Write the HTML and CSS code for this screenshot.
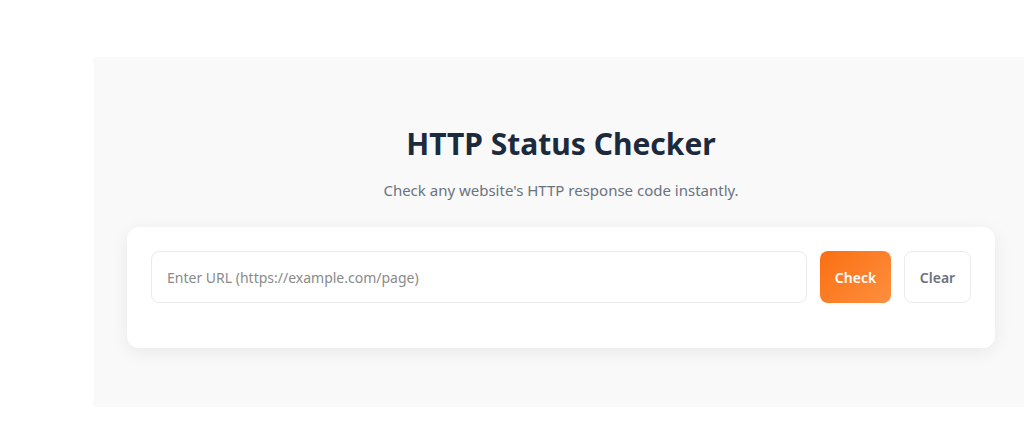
FILE: index.html
```html
<!DOCTYPE html>
<html lang="en">
<head>
  <meta charset="UTF-8">
  <meta name="viewport" content="width=device-width, initial-scale=1.0">
  <title>HTTP Status Checker</title>
  <link rel="stylesheet" href="styles.css">
</head>
<body>
  <main class="panel">
    <h1>HTTP Status Checker</h1>
    <p class="subtitle">Check any website's HTTP response code instantly.</p>

    <!-- Checker card -->
    <div class="card">
      <div class="row">
        <input type="text" class="url-input" placeholder="Enter URL (https://example.com/page)" autocomplete="off">
        <button class="check-btn">Check</button>
        <button class="clear-btn">Clear</button>
      </div>
      <div class="results"></div>
    </div>
  </main>
</body>
</html>
```

FILE: styles.css
```css
body {
  margin: 0;
  background: #ffffff;
  font-family: "Noto Sans", "Open Sans", Arial, sans-serif;
  color: #1e293b;
}

.panel {
  margin: 57px 0 0 94px;
  width: 934px;
  height: 350px;
  box-sizing: border-box;
  padding: 67px 33px 0;
  background: #f9f9f9;
}

h1 {
  margin: 0;
  text-align: center;
  font-size: 30px;
  line-height: 40px;
  font-weight: 700;
  color: #1b2a3d;
}

.subtitle {
  margin: 14px 0 0;
  text-align: center;
  font-size: 15px;
  line-height: 24px;
  color: #6b7280;
}

.card {
  margin-top: 25px;
  background: #ffffff;
  border-radius: 12px;
  padding: 24px 24px 0;
  box-shadow: 0 4px 18px rgba(0, 0, 0, 0.07);
}

.row {
  display: flex;
  gap: 13px;
}

.url-input {
  flex: 1;
  height: 52px;
  box-sizing: border-box;
  padding: 0 15px;
  border: 1px solid #ebebeb;
  border-radius: 8px;
  font-family: inherit;
  font-size: 14px;
  color: #333;
}

.url-input::placeholder {
  color: #8a8a8a;
}

.check-btn, .clear-btn {
  height: 52px;
  border-radius: 8px;
  font-family: inherit;
  font-size: 14px;
  font-weight: 600;
  cursor: pointer;
}

.check-btn {
  width: 71px;
  border: none;
  color: #ffffff;
  background: linear-gradient(135deg, #fb6f12, #fd8f3f);
}

.clear-btn {
  width: 67px;
  border: 1px solid #ebebeb;
  background: #ffffff;
  color: #6b7280;
}

.results {
  height: 45px;
}
```
